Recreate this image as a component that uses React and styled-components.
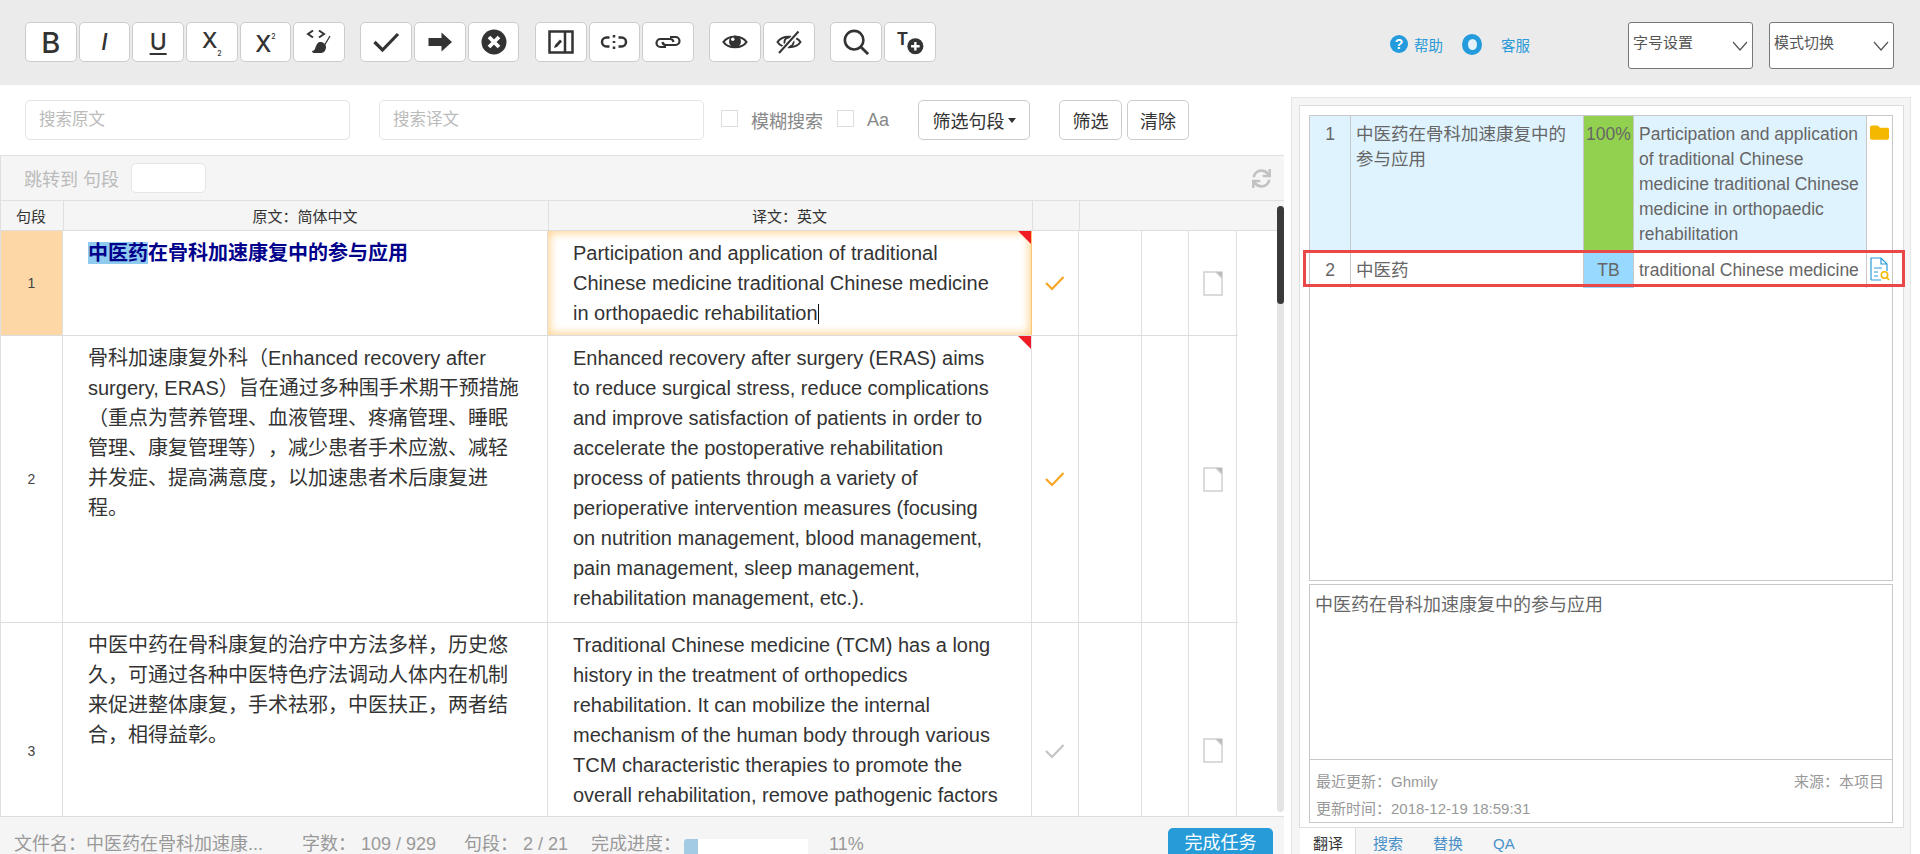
// Import Dependencies
import React from "react";
import styled, { createGlobalStyle } from "styled-components";
import { FaSync, FaFolder } from "react-icons/fa";

const GlobalStyle = createGlobalStyle`
  html, body {
    margin: 0;
    padding: 0;
    height: 100%;
    overflow: hidden;
    background: #fff;
  }
  body, input, select, button {
    font-family: "Liberation Sans", "Noto Sans CJK SC", sans-serif;
    text-spacing-trim: space-all;
  }
  * {
    box-sizing: border-box;
  }
`;

// Page
const Page = styled.div`
  width: 1920px;
  height: 854px;
  overflow: hidden;
  display: flex;
  flex-direction: column;
`;

// Top toolbar
const Toolbar = styled.header`
  height: 85px;
  flex: none;
  background: #ebebeb;
  display: flex;
  padding: 22px 26px 0 25px;
`;

const ToolGroup = styled.div`
  display: flex;
  gap: 2px;
  margin-right: 15.5px;
  height: 40px;
`;

const ToolButton = styled.button`
  position: relative;
  width: 51.67px;
  height: 40px;
  padding: 0;
  background: #fff;
  border: 1px solid #ccc;
  border-radius: 5px;
  color: #333;
  display: flex;
  align-items: center;
  justify-content: center;
`;

const LetterIcon = styled.span`
  font-family: "Inter", "Liberation Sans", sans-serif;
  font-size: ${(p) => p.$size || 23}px;
  font-style: ${(p) => (p.$italic ? "italic" : "normal")};
  font-weight: 500;
  line-height: 1;
  color: #333;
  text-decoration: ${(p) => (p.$underline ? "underline" : "none")};
  text-decoration-thickness: 2px;
  text-underline-offset: 3px;
  transform: translateY(${(p) => p.$shift || 0}px);
`;

const TinyDigit = styled.span`
  font-size: 7px;
  font-weight: 500;
  position: relative;
  top: ${(p) => (p.$up ? -13 : 8)}px;
`;

const HelpArea = styled.div`
  display: flex;
  align-items: center;
  height: 18px;
  margin: 13px 0 0 auto;
  font-size: 14.5px;
  color: #2a9ad8;
`;

const HelpIcon = styled.span`
  width: 18px;
  height: 18px;
  border-radius: 50%;
  background: #239bdc;
  color: #fff;
  font-size: 14px;
  font-weight: bold;
  display: flex;
  align-items: center;
  justify-content: center;
  margin-right: 6px;
`;

const ServiceIcon = styled.span`
  width: 20px;
  height: 21px;
  border-radius: 50%;
  background: #239bdc;
  display: flex;
  align-items: center;
  justify-content: center;
  margin: 0 19px 0 19px;
  &::after {
    content: "";
    width: 9px;
    height: 11px;
    border-radius: 50%;
    background: #e4f2fa;
  }
`;

const SelectBox = styled.div`
  width: 125px;
  height: 47px;
  margin-left: ${(p) => p.$gap}px;
  background: #fff;
  border: 1px solid #777;
  border-radius: 3px;
  padding: 0 4px;
  display: flex;
  align-items: center;
  justify-content: space-between;
  font-size: 15px;
  color: #555;
  span {
    margin-top: -9px;
  }
`;

// Main area
const Main = styled.main`
  flex: 1;
  display: flex;
  min-height: 0;
`;

const LeftPane = styled.section`
  width: 1284px;
  flex: none;
  display: flex;
  flex-direction: column;
`;

const FilterRow = styled.div`
  height: 70px;
  flex: none;
  padding: 15px 0 0 25px;
  display: flex;
  align-items: flex-start;
`;

const SearchInput = styled.div`
  width: 325px;
  height: 40px;
  border: 1px solid #e4e4e4;
  border-radius: 5px;
  padding-left: 13px;
  margin-right: ${(p) => p.$gap}px;
  font-size: 16.5px;
  line-height: 37px;
  color: #bbb;
`;

const CheckLabel = styled.label`
  height: 40px;
  display: flex;
  align-items: center;
  font-size: 18px;
  color: #888;
  margin-right: ${(p) => p.$gap}px;
`;

const CheckSquare = styled.span`
  width: 17px;
  height: 17px;
  border: 1px solid #ddd;
  margin: -3px 13px 0 0;
`;

const FilterButton = styled.button`
  height: 40px;
  padding: 0;
  width: ${(p) => p.$width}px;
  margin-right: ${(p) => p.$gap}px;
  background: #fff;
  border: 1px solid #ccc;
  border-radius: 5px;
  font-size: 18px;
  color: #333;
  display: flex;
  align-items: center;
  justify-content: center;
  flex: none;
`;

const Caret = styled.i`
  border-top: 5px solid #333;
  border-left: 4.5px solid transparent;
  border-right: 4.5px solid transparent;
  margin-left: 3px;
`;

const JumpBar = styled.div`
  height: 46px;
  flex: none;
  background: #f5f5f5;
  border: 1px solid #e0e0e0;
  border-width: 1px 0 1px 1px;
  display: flex;
  align-items: center;
  padding: 0 13px 0 23px;
  font-size: 18px;
  color: #bbb;
`;

const JumpInput = styled.div`
  width: 75px;
  height: 30px;
  background: #fff;
  border: 1px solid #e6e6e6;
  border-radius: 5px;
  margin-left: 12px;
`;

const Refresh = styled(FaSync)`
  margin-left: auto;
  font-size: 19px;
  color: #c2c2c2;
`;

const TableWrap = styled.div`
  position: relative;
  flex: 1;
  min-height: 0;
  display: flex;
  flex-direction: column;
`;

const HeaderRow = styled.div`
  height: 30px;
  flex: none;
  display: grid;
  grid-template-columns: 63px 485px 484px 47px 1fr;
  background: #f5f5f5;
  border-bottom: 1px solid #ddd;
  border-left: 1px solid #e0e0e0;
`;

const HeaderCell = styled.div`
  border-right: 1px solid #e0e0e0;
  padding-right: 2px;
  font-size: 15px;
  color: #333;
  display: flex;
  align-items: center;
  justify-content: center;
  &:last-child {
    border-right: none;
  }
`;

const ScrollArea = styled.div`
  flex: 1;
  min-height: 0;
  overflow: hidden;
  border-bottom: 1px solid #ddd;
  border-left: 1px solid #e0e0e0;
`;

const ScrollThumb = styled.div`
  position: absolute;
  top: 5px;
  right: 0;
  width: 7px;
  height: 98px;
  border-radius: 4px;
  background: #3a3a3a;
  z-index: 2;
`;

const ScrollTrack = styled.div`
  position: absolute;
  top: 5px;
  bottom: 5px;
  right: 0;
  width: 7px;
  border-radius: 4px;
  background: #e4e4e4;
`;

const Row = styled.div`
  display: grid;
  width: 1237px;
  grid-template-columns: 62px 485px 484px 47px 63px 47px 48px;
  min-height: ${(p) => p.$minHeight || 0}px;
  border-bottom: 1px solid #ddd;
`;

const Cell = styled.div`
  border-right: 1px solid #e0e0e0;
  display: flex;
  align-items: center;
  justify-content: center;
  font-size: 14px;
  color: #444;
  background: ${(p) => p.$bg || "transparent"};
`;

const TextCell = styled.div`
  position: relative;
  border-right: 1px solid #e0e0e0;
  padding: ${(p) => (p.$target ? "7px 29px 7px 25px" : "7px 24px 7px 25px")};
  font-size: 20px;
  line-height: 30px;
  color: #333;
  ${(p) =>
    p.$active &&
    `
    background: #fff;
    box-shadow: inset 0 0 8px 2px #ffd391;
    border-right: 1px solid #ffc56e;
  `}
`;

const ActiveSource = styled.span`
  font-weight: bold;
  color: #00008b;
`;

const Hit = styled.span`
  background: #8ecbef;
`;

const Corner = styled.i`
  position: absolute;
  top: 0;
  right: 0;
  width: 0;
  height: 0;
  border-top: 13px solid #ef1c25;
  border-left: 13px solid transparent;
`;

const TextCursor = styled.i`
  display: inline-block;
  width: 1px;
  height: 20px;
  background: #111;
  vertical-align: -4px;
`;

// Footer
const Footer = styled.footer`
  height: 37px;
  flex: none;
  background: #f5f5f5;
  display: flex;
  align-items: flex-end;
  padding: 0 11px 0 14px;
  font-size: 18px;
  line-height: 20px;
  color: #999;
`;

const FooterItem = styled.span`
  width: ${(p) => p.$width}px;
  flex: none;
  white-space: pre;
`;

const Progress = styled.div`
  width: 124px;
  height: 15px;
  flex: none;
  background: #fff;
  margin-right: 21px;
  border-radius: 3px 0 0 0;
  overflow: hidden;
`;

const ProgressFill = styled.div`
  height: 100%;
  background: #a3cbe4;
`;

const FinishButton = styled.button`
  margin-left: auto;
  width: 105px;
  height: 26px;
  border: none;
  border-radius: 5px 5px 0 0;
  background: #269bd8;
  color: #fff;
  font-size: 18px;
  padding: 0;
`;

// Right pane
const RightPane = styled.aside`
  flex: 1;
  padding: 12px 10px 0 7px;
  display: flex;
  min-width: 0;
`;

const Outer = styled.div`
  flex: 1;
  background: #f5f5f5;
  border: 1px solid #e6e6e6;
  border-bottom: none;
  padding: 7px 6px 0 7px;
  display: flex;
  flex-direction: column;
`;

const Inner = styled.div`
  position: relative;
  height: 723px;
  flex: none;
  background: #fff;
  border: 1px solid #ddd;
  padding: 9px 10px 4px 9px;
  display: flex;
  flex-direction: column;
`;

const MatchBox = styled.div`
  height: 466px;
  flex: none;
  border: 1px solid #c8c8c8;
`;

const MatchRow = styled.div`
  display: grid;
  grid-template-columns: 41px 233px 50px 233px 25px;
  border-bottom: ${(p) => (p.$last ? "none" : "1px solid #c8c8c8")};
  min-height: ${(p) => p.$height}px;
`;

const MatchCell = styled.div`
  border-right: 1px solid #c8c8c8;
  background: ${(p) => p.$bg || "transparent"};
  padding: ${(p) => p.$pad || "0 5px"};
  font-size: 17.5px;
  line-height: 25px;
  color: #666;
  text-align: ${(p) => p.$align || "left"};
  white-space: ${(p) => (p.$nowrap ? "nowrap" : "normal")};
  &:last-child {
    border-right: none;
  }
`;

const RedBox = styled.div`
  position: absolute;
  left: 3px;
  top: 144px;
  height: 37px;
  width: 602px;
  border: 3px solid #ea4747;
  pointer-events: none;
`;

const SourceBox = styled.div`
  margin-top: 3px;
  flex: 1;
  min-height: 0;
  border: 1px solid #c8c8c8;
  display: flex;
  flex-direction: column;
`;

const SourceText = styled.div`
  flex: 1;
  padding: 8px 5px;
  font-size: 18px;
  line-height: 24px;
  color: #666;
  border-bottom: 1px solid #c8c8c8;
`;

const Meta = styled.div`
  height: 62px;
  flex: none;
  padding: 8px 8px 0 6px;
  font-size: 15px;
  line-height: 27px;
  color: #999;
`;

const MetaLine = styled.div`
  display: flex;
  justify-content: space-between;
`;

const Tabs = styled.nav`
  flex: 1;
  display: flex;
  margin-left: 1px;
  font-size: 15px;
  line-height: 17px;
  color: #4a90c8;
`;

const Tab = styled.span`
  padding: 7px 0 0 ${(p) => p.$pad}px;
`;

const ActiveTab = styled.span`
  width: 56px;
  background: #fff;
  border-right: 1px solid #ddd;
  color: #333;
  padding: 7px 0 0 13px;
`;

// Icons drawn inline
const Svg = ({ size = 28, children }) => (
  <svg width={size} height={size} viewBox="0 0 28 28" fill="none" stroke="#333" strokeWidth="3">
    {children}
  </svg>
);

const CleanIcon = () => (
  <Svg>
    <path d="M8 2.500 3 6l5 3.500M14 2.500 19 6l-5 3.500" strokeWidth="2" />
    <path d="M25 8 19 18" strokeWidth="1.300" />
    <path d="M15 14c3 0 6 2 6 5 0 3-2 6-5 6H9c-1 0-2-1-2-2 3 0 3-3 4-5 1-2 2-4 4-4z" fill="#333" stroke="none" />
  </Svg>
);

const CheckIcon = () => (
  <Svg>
    <path d="M2.500 14l8 8L26 6" strokeWidth="3.200" />
  </Svg>
);

const ArrowIcon = () => (
  <Svg>
    <path d="M2.500 10h13V4.500L26 14 15.500 23.500V18h-13z" fill="#333" stroke="none" />
  </Svg>
);

const CloseIcon = () => (
  <Svg>
    <circle cx="14" cy="14" r="12.500" fill="#333" stroke="none" />
    <path d="M9 9l10 10M19 9 9 19" stroke="#fff" strokeWidth="3.800" />
  </Svg>
);

const SplitIcon = () => (
  <Svg>
    <path d="M2.500 3.500h23v21h-23z" strokeWidth="2.500" />
    <path d="M18 3.500v21" strokeWidth="2.500" />
    <path d="M7 20l1-3 5-5.500 2 2L10 19z" fill="#333" stroke="none" />
  </Svg>
);

const BreakLinkIcon = () => (
  <Svg>
    <path d="M9.500 9.500H6.500a4.500 4.500 0 0 0 0 9h3M18.500 9.500h3a4.500 4.500 0 0 1 0 9h-3" strokeWidth="2.500" />
    <path d="M14 7v2.500M14 13v2M14 18.500V21" strokeWidth="2.500" />
  </Svg>
);

const LinkIcon = () => (
  <Svg>
    <path d="M12 19H6.500a4 4 0 0 1 0-8H16a3.500 3.500 0 0 1 3.500 3" strokeWidth="2.200" />
    <path d="M16 9h5.500a4 4 0 0 1 0 8H12a3.500 3.500 0 0 1-3.500-3" strokeWidth="2.200" />
  </Svg>
);

const EyeIcon = () => (
  <Svg>
    <path d="M2.500 14C7 7 21 7 25.500 14 21 21 7 21 2.500 14z" strokeWidth="2.200" />
    <circle cx="14" cy="13.500" r="6" fill="#333" stroke="none" />
    <circle cx="11.800" cy="11.300" r="1.700" fill="#fff" stroke="none" />
  </Svg>
);

const EyeOffIcon = () => (
  <Svg>
    <path d="M2.500 14C7 7 21 7 25.500 14 21 21 7 21 2.500 14z" strokeWidth="2" />
    <circle cx="14" cy="14" r="4.500" strokeWidth="2" />
    <path d="M4 25.500 24 3.500" stroke="#fff" strokeWidth="5" />
    <path d="M4 25 23.500 3.500" strokeWidth="2" />
  </Svg>
);

const SearchIcon = () => (
  <Svg size={26}>
    <circle cx="12" cy="12" r="10" strokeWidth="2.800" />
    <path d="M19 19 27 27" strokeWidth="3" />
  </Svg>
);

const AddTextIcon = () => (
  <Svg size={30}>
    <circle cx="19" cy="18" r="7.500" fill="#333" stroke="none" />
    <path d="M15 18h8M19 14v8" stroke="#fff" strokeWidth="2.200" />
  </Svg>
);

const TIcon = styled.span`
  position: absolute;
  left: 12px;
  top: 6px;
  font-family: "Inter", "Liberation Sans", sans-serif;
  font-weight: 700;
  font-size: 17px;
  line-height: 20px;
  color: #333;
`;

const Tick = ({ color }) => (
  <svg width="20" height="16" viewBox="0 0 20 16" fill="none" stroke={color} strokeWidth="2.200">
    <path d="M1 8l6 6L18.500 2" />
  </svg>
);

const PageIcon = () => (
  <svg width="20" height="25" viewBox="0 0 20 25" fill="#fff" stroke="#cfcfcf" strokeWidth="1.500">
    <path d="M1 1h12l6 6v17H1z" />
    <path d="M13 .5l6.500 6.500V.5z" fill="#bbb" stroke="none" />
  </svg>
);

const DocSearchIcon = () => (
  <svg width="20" height="24" viewBox="0 0 20 24" fill="none" stroke="#2a9ad8" strokeWidth="1.200">
    <path d="M1 23V1h10l6 6v7M11 1v6h6M1 23h10M4 11h8M4 15h4M4 19h4" />
    <circle cx="14.500" cy="18" r="3.200" stroke="#f5b800" strokeWidth="1.500" />
    <path d="M17 20.500 19 23" stroke="#f5b800" strokeWidth="1.500" />
  </svg>
);

const SelectArrow = () => (
  <svg width="16" height="10" viewBox="0 0 16 10" fill="none" stroke="#555" strokeWidth="1.200">
    <path d="M1 1l7 8 7-8" />
  </svg>
);

const rows = [
  {
    id: 1,
    minHeight: 105,
    active: true,
    tick: "#f5a623",
    target: (
      <>
        Participation and application of traditional Chinese medicine traditional Chinese medicine
        in orthopaedic rehabilitation
        <TextCursor />
      </>
    ),
    source: (
      <ActiveSource>
        <Hit>中医药</Hit>在骨科加速康复中的参与应用
      </ActiveSource>
    ),
    flagged: true,
  },
  {
    id: 2,
    minHeight: 287,
    tick: "#f5a623",
    source:
      "骨科加速康复外科（Enhanced recovery after surgery, ERAS）旨在通过多种围手术期干预措施（重点为营养管理、血液管理、疼痛管理、睡眠管理、康复管理等），减少患者手术应激、减轻并发症、提高满意度，以加速患者术后康复进程。",
    target:
      "Enhanced recovery after surgery (ERAS) aims to reduce surgical stress, reduce complications and improve satisfaction of patients in order to accelerate the postoperative rehabilitation process of patients through a variety of perioperative intervention measures (focusing on nutrition management, blood management, pain management, sleep management, rehabilitation management, etc.).",
    flagged: true,
  },
  {
    id: 3,
    minHeight: 256,
    tick: "#c4c4c4",
    source:
      "中医中药在骨科康复的治疗中方法多样，历史悠久，可通过各种中医特色疗法调动人体内在机制来促进整体康复，手术祛邪，中医扶正，两者结合，相得益彰。",
    target:
      "Traditional Chinese medicine (TCM) has a long history in the treatment of orthopedics rehabilitation. It can mobilize the internal mechanism of the human body through various TCM characteristic therapies to promote the overall rehabilitation, remove pathogenic factors",
  },
];

export default function App() {
  return (
    <Page>
      <GlobalStyle />
      <Toolbar>
        <ToolGroup>
          <ToolButton><LetterIcon $size={29}>B</LetterIcon></ToolButton>
          <ToolButton><LetterIcon $italic>I</LetterIcon></ToolButton>
          <ToolButton><LetterIcon $underline>U</LetterIcon></ToolButton>
          <ToolButton><LetterIcon $size={22} $shift={-2}>X<TinyDigit>2</TinyDigit></LetterIcon></ToolButton>
          <ToolButton><LetterIcon $shift={2}>X<TinyDigit $up>2</TinyDigit></LetterIcon></ToolButton>
          <ToolButton><CleanIcon /></ToolButton>
        </ToolGroup>
        <ToolGroup>
          <ToolButton><CheckIcon /></ToolButton>
          <ToolButton><ArrowIcon /></ToolButton>
          <ToolButton><CloseIcon /></ToolButton>
        </ToolGroup>
        <ToolGroup>
          <ToolButton><SplitIcon /></ToolButton>
          <ToolButton><BreakLinkIcon /></ToolButton>
          <ToolButton><LinkIcon /></ToolButton>
        </ToolGroup>
        <ToolGroup>
          <ToolButton><EyeIcon /></ToolButton>
          <ToolButton><EyeOffIcon /></ToolButton>
        </ToolGroup>
        <ToolGroup>
          <ToolButton><SearchIcon /></ToolButton>
          <ToolButton>
            <TIcon>T</TIcon>
            <AddTextIcon />
          </ToolButton>
        </ToolGroup>

        <HelpArea>
          <HelpIcon>?</HelpIcon>
          帮助
          <ServiceIcon />
          客服
        </HelpArea>
        <SelectBox $gap={98}><span>字号设置</span><SelectArrow /></SelectBox>
        <SelectBox $gap={16}><span>模式切换</span><SelectArrow /></SelectBox>
      </Toolbar>

      <Main>
        <LeftPane>
          <FilterRow>
            <SearchInput $gap={29}>搜索原文</SearchInput>
            <SearchInput $gap={17}>搜索译文</SearchInput>
            <CheckLabel $gap={14}><CheckSquare />模糊搜索</CheckLabel>
            <CheckLabel $gap={29}><CheckSquare />Aa</CheckLabel>
            <FilterButton $width={112} $gap={29}>筛选句段<Caret /></FilterButton>
            <FilterButton $width={63} $gap={5}>筛选</FilterButton>
            <FilterButton $width={62} $gap={0}>清除</FilterButton>
          </FilterRow>
          <JumpBar>
            跳转到 句段
            <JumpInput />
            <Refresh />
          </JumpBar>
          <TableWrap>
            <ScrollTrack />
            <ScrollThumb />
            <HeaderRow>
              <HeaderCell>句段</HeaderCell>
              <HeaderCell>原文：简体中文</HeaderCell>
              <HeaderCell>译文：英文</HeaderCell>
              <HeaderCell />
              <HeaderCell />
            </HeaderRow>
            <ScrollArea>
              {rows.map((row) => (
                <Row key={row.id} $minHeight={row.minHeight}>
                  <Cell $bg={row.active ? "#fdd7a6" : undefined}>{row.id}</Cell>
                  <TextCell>{row.source}</TextCell>
                  <TextCell $target $active={row.active}>
                    {row.target}
                    {row.flagged && <Corner />}
                  </TextCell>
                  <Cell><Tick color={row.tick} /></Cell>
                  <Cell />
                  <Cell />
                  <Cell><PageIcon /></Cell>
                </Row>
              ))}
            </ScrollArea>
          </TableWrap>
          <Footer>
            <FooterItem $width={288}>文件名：中医药在骨科加速康...</FooterItem>
            <FooterItem $width={162}>字数： 109 / 929</FooterItem>
            <FooterItem $width={127}>句段： 2 / 21</FooterItem>
            <FooterItem $width={93}>完成进度：</FooterItem>
            <Progress>
              <ProgressFill style={{ width: "11%" }} />
            </Progress>
            <FooterItem $width={40}>11%</FooterItem>
            <FinishButton>完成任务</FinishButton>
          </Footer>
        </LeftPane>

        <RightPane>
          <Outer>
            <Inner>
              <MatchBox>
                <MatchRow $height={135}>
                  <MatchCell $bg="#dff3ff" $align="center" $pad="6px 0 0">1</MatchCell>
                  <MatchCell $bg="#dff3ff" $pad="6px 5px 0">中医药在骨科加速康复中的参与应用</MatchCell>
                  <MatchCell $bg="#92d14f" $align="center" $pad="6px 0 0">100%</MatchCell>
                  <MatchCell $bg="#dff3ff" $pad="6px 5px 0">
                    Participation and application of traditional Chinese medicine traditional Chinese
                    medicine in orthopaedic rehabilitation
                  </MatchCell>
                  <MatchCell $pad="7px 3px 0"><FaFolder color="#f5b800" size={19} /></MatchCell>
                </MatchRow>
                <MatchRow $height={35} $last>
                  <MatchCell $align="center" $pad="7px 0 0">2</MatchCell>
                  <MatchCell $pad="7px 5px 0">中医药</MatchCell>
                  <MatchCell $bg="#98d9ff" $align="center" $pad="7px 0 0">TB</MatchCell>
                  <MatchCell $pad="7px 5px 0" $nowrap>traditional Chinese medicine</MatchCell>
                  <MatchCell $pad="6px 3px 0"><DocSearchIcon /></MatchCell>
                </MatchRow>
              </MatchBox>
              <RedBox />
              <SourceBox>
                <SourceText>中医药在骨科加速康复中的参与应用</SourceText>
                <Meta>
                  <MetaLine>
                    <span>最近更新：Ghmily</span>
                    <span>来源：本项目</span>
                  </MetaLine>
                  <div>更新时间：2018-12-19 18:59:31</div>
                </Meta>
              </SourceBox>
            </Inner>
            <Tabs>
              <ActiveTab>翻译</ActiveTab>
              <Tab $pad={17}>搜索</Tab>
              <Tab $pad={30}>替换</Tab>
              <Tab $pad={30}>QA</Tab>
            </Tabs>
          </Outer>
        </RightPane>
      </Main>
    </Page>
  );
}
